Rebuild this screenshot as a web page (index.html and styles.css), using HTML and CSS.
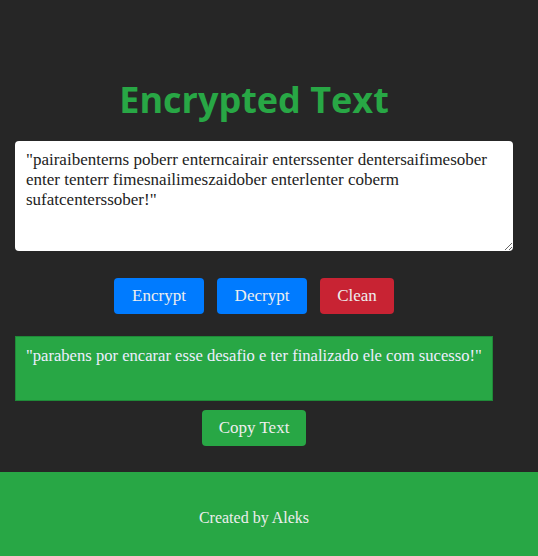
FILE: index.html
```html
<!DOCTYPE html>
<html lang="en">
<head>
<meta charset="utf-8">
<title>Encrypted Text</title>
<link rel="stylesheet" href="styles.css">
</head>
<body>
<main class="main">
  <h1 class="title">Encrypted Text</h1>
  <textarea class="input">"pairaibenterns poberr enterncairair enterssenter dentersaifimesober enter tenterr fimesnailimeszaidober enterlenter coberm sufatcenterssober!"</textarea>
  <div class="actions">
    <button class="btn btn-blue btn-wide">Encrypt</button>
    <button class="btn btn-blue btn-wide">Decrypt</button>
    <button class="btn btn-red">Clean</button>
  </div>
  <div class="output">"parabens por encarar esse desafio e ter finalizado ele com sucesso!"</div>
  <div class="copy-row">
    <button class="btn btn-green">Copy Text</button>
  </div>
</main>
<footer class="footer">Created by Aleks</footer>
</body>
</html>
```
FILE: styles.css
```css
* { box-sizing: border-box; }
html, body { margin: 0; padding: 0; }
body {
  background: #262626;
  font-family: "Liberation Serif", serif;
  width: 538px;
  height: 556px;
  overflow: hidden;
  display: flex;
  flex-direction: column;
}
.main {
  width: 508px;
  padding: 0 15px;
  flex: 1;
  display: flex;
  flex-direction: column;
  align-items: flex-start;
}
.title {
  align-self: stretch;
  text-align: center;
  margin: 76px 0 0;
  font-family: "Open Sans", sans-serif;
  font-weight: 700;
  font-size: 36px;
  line-height: 48px;
  color: #28a745;
}
.input {
  margin-top: 17px;
  width: 498px;
  height: 110px;
  border: none;
  border-radius: 4px;
  background: #fff;
  padding: 9px 11px;
  font-family: "Liberation Serif", serif;
  font-size: 17px;
  line-height: 20px;
  color: #222;
  resize: vertical;
}
.actions {
  align-self: stretch;
  display: flex;
  justify-content: center;
  gap: 13px;
  margin-top: 27px;
}
.btn {
  height: 36px;
  border: none;
  border-radius: 4px;
  color: #eee;
  font-family: "Liberation Serif", serif;
  font-size: 17px;
  padding: 0;
  white-space: nowrap;
}
.btn-wide { width: 90px; }
.btn-blue { background: #007bff; }
.btn-red { background: #c82333; width: 74px; }
.btn-green { background: #28a745; width: 104px; }
.output {
  margin-top: 22px;
  align-self: stretch;
  height: 65px;
  background: #28a745;
  border: 1px solid #1f8a38;
  padding: 8px 10px;
  font-size: 16.6px;
  line-height: 22px;
  white-space: nowrap;
  color: #eef;
}
.copy-row {
  align-self: stretch;
  display: flex;
  justify-content: center;
  margin-top: 9px;
}
.footer {
  height: 84px;
  background: #28a745;
  display: flex;
  align-items: center;
  justify-content: center;
  padding: 8px 30px 0 0;
  color: #eee;
  font-size: 16px;
  flex: none;
}
```
